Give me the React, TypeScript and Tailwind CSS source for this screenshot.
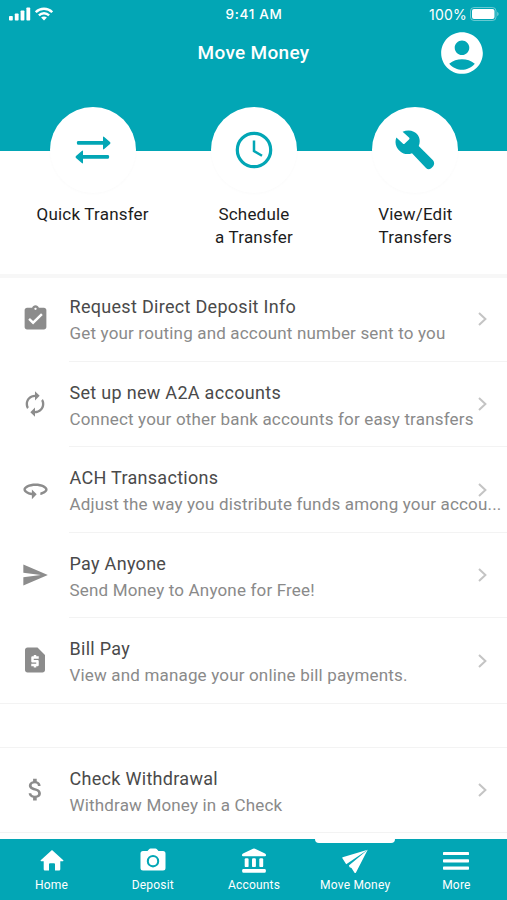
import type { ReactNode } from "react";
import {
    Md360,
    MdAccountCircle,
    MdAssignmentTurnedIn,
    MdAttachMoney,
    MdAutorenew,
    MdRequestPage,
    MdSend,
} from "react-icons/md";

interface MenuItem {
    title: string;
    description: string;
    icon: ReactNode;
}

const menuItems: MenuItem[] = [
    {
        title: "Request Direct Deposit Info",
        description: "Get your routing and account number sent to you",
        icon: <MdAssignmentTurnedIn size={29} />,
    },
    {
        title: "Set up new A2A accounts",
        description: "Connect your other bank accounts for easy transfers",
        icon: <MdAutorenew size={28} />,
    },
    {
        title: "ACH Transactions",
        description: "Adjust the way you distribute funds among your accou...",
        icon: <Md360 size={29} />,
    },
    {
        title: "Pay Anyone",
        description: "Send Money to Anyone for Free!",
        icon: <MdSend size={28} />,
    },
    {
        title: "Bill Pay",
        description: "View and manage your online bill payments.",
        icon: <MdRequestPage size={30} />,
    },
];

const withdrawal: MenuItem = {
    title: "Check Withdrawal",
    description: "Withdraw Money in a Check",
    icon: <MdAttachMoney size={29} />,
};

function StatusBar() {
    return (
        <div className="flex h-7 items-center justify-between pl-[9px] pr-[8px] text-white">
            <div className="flex w-[90px] items-center gap-1">
                <svg width="22" height="14" viewBox="0 0 22 14" fill="currentColor">
                    <rect x="0" y="9" width="3.8" height="4.5" rx="0.8" />
                    <rect x="5.8" y="6.5" width="3.8" height="7" rx="0.8" />
                    <rect x="11.6" y="3.5" width="3.8" height="10" rx="0.8" />
                    <rect x="17.4" y="0.5" width="3.8" height="13" rx="0.8" />
                </svg>
                <svg width="18" height="14" viewBox="0 0 18 14" fill="none" stroke="currentColor" strokeWidth="2.3">
                    <path d="M0.8 5.2C5.4 0.6 12.6 0.6 17.2 5.2" />
                    <path d="M3.9 8.4C6.8 5.5 11.2 5.5 14.1 8.4" />
                    <path d="M9 13.4L6.1 10.5C7.7 9 10.3 9 11.9 10.5Z" fill="currentColor" stroke="none" />
                </svg>
            </div>
            <span className="font-['Inter',sans-serif] text-[13.5px] font-medium tracking-[0.7px]">9:41 AM</span>
            <div className="flex w-[90px] items-center justify-end gap-[3px]">
                <span className="font-['Inter',sans-serif] text-[14px] tracking-[0.2px]">100%</span>
                <svg width="29" height="14" viewBox="0 0 29 14" fill="currentColor">
                    <rect x="0.5" y="0.5" width="25.5" height="13" rx="3.5" fill="none" stroke="currentColor" opacity="0.4" />
                    <rect x="2" y="2" width="22.5" height="10" rx="2" />
                    <path d="M27.3 4.8C29 5.5 29 8.5 27.3 9.2Z" opacity="0.5" />
                </svg>
            </div>
        </div>
    );
}

function QuickAction({ label, children }: { label: string; children: ReactNode }) {
    return (
        <div className="flex flex-1 flex-col items-center">
            <div className="flex size-[86px] items-center justify-center rounded-full bg-white text-[#02a6b5] shadow-[0_1px_3px_rgba(0,0,0,0.02)]">
                {children}
            </div>
            <p className="mt-[10px] whitespace-pre-line text-center text-[17px] leading-[23px] tracking-[0.2px] text-[#1c1c1c]">
                {label}
            </p>
        </div>
    );
}

function MenuRow({ item, last = false }: { item: MenuItem; last?: boolean }) {
    return (
        <div className={`flex h-[85.5px] ${last ? "border-b border-[#f3f3f3]" : ""}`}>
            <div className="flex w-[70px] shrink-0 items-center justify-center text-[#8c8c8c]">{item.icon}</div>
            <div
                className={`relative -ml-px flex min-w-0 flex-1 flex-col justify-center pl-[0.5px] pt-[3.5px] ${last ? "" : "border-b border-[#f3f3f3]"}`}
            >
                <h2 className="text-[18px] leading-[26px] tracking-[0.3px] text-[#4a4a4a]">{item.title}</h2>
                <p className="whitespace-nowrap text-[17px] leading-[26px] tracking-[0.17px] text-[#8a8a8a]">
                    {item.description}
                </p>
                <svg
                    className="absolute right-5 top-[35.5px] text-[#c4c4c4]"
                    width="9"
                    height="14"
                    viewBox="0 0 9 14"
                    fill="none"
                    stroke="currentColor"
                    strokeWidth="2"
                >
                    <path d="M1 1L7.4 7L1 13" />
                </svg>
            </div>
        </div>
    );
}

function NavItem({ label, active = false, children }: { label: string; active?: boolean; children: ReactNode }) {
    return (
        <div className="relative flex flex-1 flex-col items-center pt-2">
            {active && <span className="absolute -top-px h-[5px] w-20 rounded-b bg-white" />}
            <svg width="28" height="28" viewBox="0 0 28 28" fill="currentColor">
                {children}
            </svg>
            <span className="mt-[2px] whitespace-nowrap text-[12px] leading-4 tracking-[0.2px]">{label}</span>
        </div>
    );
}

export default function App() {
    return (
        <div className="flex h-[900px] w-[507px] flex-col overflow-hidden bg-white font-['Roboto',sans-serif]">
            <header className="h-[151px] shrink-0 bg-[#02a6b5]">
                <StatusBar />
                <div className="grid h-[50px] grid-cols-[1fr_auto_1fr] items-center text-white">
                    <h1 className="col-start-2 text-[19px] font-medium tracking-[0.3px]">Move Money</h1>
                    <MdAccountCircle size={50} className="mr-5 justify-self-end" />
                </div>
            </header>

            <section className="-mt-11 flex h-[167px] shrink-0 pl-3 pr-[11px]">
                <QuickAction label="Quick Transfer">
                    <svg width="36" height="28" viewBox="0 0 36 28" fill="currentColor">
                        <path d="M3 4.9H28V1.5Q28 0 29.2 1L35 6Q36 7 35 8L29.2 13Q28 14 28 12.5V8.7H3Q1.8 8.7 1.8 6.8Q1.8 4.9 3 4.9Z" />
                        <path d="M33 18.9H8V15.5Q8 14 6.8 15L1 20Q0 21 1 22L6.8 27Q8 28 8 26.5V22.7H33Q34.2 22.7 34.2 20.8Q34.2 18.9 33 18.9Z" />
                    </svg>
                </QuickAction>
                <QuickAction label={"Schedule\na Transfer"}>
                    <svg width="38" height="38" viewBox="0 0 38 38" fill="none" stroke="currentColor">
                        <circle cx="19" cy="19" r="16.7" strokeWidth="3.2" />
                        <path d="M19 9.5V20L27 24.8" strokeWidth="2.5" />
                    </svg>
                </QuickAction>
                <QuickAction label={"View/Edit\nTransfers"}>
                    <svg width="40" height="40" viewBox="0 0 40 40" fill="currentColor">
                        <path d="M7.6 1.8C13 -0.8 19.4 0.3 22.8 5C25 8.2 25.3 12.4 23.7 16L38 30.3Q40.2 33 38.2 36.2L36.2 38.2Q33.5 40.3 31 38L17 23.2C13 24.8 8.3 24.2 5 21.2C0.8 17.6 -0.6 12.3 1.4 7.4L7.8 13.6Q8.8 14.6 9.8 13.6L14 9.4Q15 8.4 14 7.4Z" />
                    </svg>
                </QuickAction>
            </section>

            <main className="flex-1">
                <div className="h-1 bg-[#f7f7f7]" />
                <div className="-mt-[2px]">
                    {menuItems.map((item, index) => (
                        <MenuRow key={item.title} item={item} last={index === menuItems.length - 1} />
                    ))}
                </div>
                <div className="mt-[43px] border-t border-[#f3f3f3]">
                    <MenuRow item={withdrawal} last />
                </div>
            </main>

            <nav className="flex h-[61px] shrink-0 bg-[#02a6b5] pl-px text-white">
                <NavItem label="Home">
                    <path d="M14 3L2.7 13.2Q2.2 14.2 3.2 14.2H5.7V22.2Q5.7 23.4 6.9 23.4H11V17.3Q11 16.3 12 16.3H16Q17 16.3 17 17.3V23.4H21.1Q22.3 23.4 22.3 22.2V14.2H24.8Q25.8 14.2 25.3 13.2Z" />
                </NavItem>
                <NavItem label="Deposit">
                    <path
                        fillRule="evenodd"
                        d="M10.3 2Q10.7 1.4 11.5 1.4H16.5Q17.3 1.4 17.7 2L19.5 4H24Q26.5 4 26.5 6.5V21Q26.5 23.5 24 23.5H4Q1.5 23.5 1.5 21V6.5Q1.5 4 4 4H8.5ZM14 8A6.2 6.2 0 1 0 14 20.4A6.2 6.2 0 1 0 14 8Z"
                    />
                    <circle cx="14" cy="14.2" r="4.1" />
                </NavItem>
                <NavItem label="Accounts">
                    <path d="M13 1.7Q14 1.1 15 1.7L25 6.5Q26.2 7.3 26 8.4Q25.8 9.2 25 9.2H3Q2.2 9.2 2 8.4Q1.8 7.3 3 6.5Z" />
                    <rect x="4.7" y="11.3" width="3.9" height="8.8" rx="1.2" />
                    <rect x="12" y="11.3" width="3.9" height="8.8" rx="1.2" />
                    <rect x="19.3" y="11.3" width="3.9" height="8.8" rx="1.2" />
                    <rect x="2.2" y="22.1" width="23.6" height="3.7" rx="1.2" />
                </NavItem>
                <NavItem label="Move Money" active>
                    <path d="M26.7 2.8L1.6 10.2Q0.9 10.6 1.4 11.3L5.2 17.2Z" />
                    <path d="M26.7 2.8L7.9 18.6L8.6 20.3L10.5 21L13.5 25.7Q14.4 26.5 15 25.4Z" />
                </NavItem>
                <NavItem label="More">
                    <rect x="1" y="5" width="26" height="3.1" rx="0.7" />
                    <rect x="1" y="12.3" width="26" height="3.1" rx="0.7" />
                    <rect x="1" y="19.6" width="26" height="3.1" rx="0.7" />
                </NavItem>
            </nav>
        </div>
    );
}
